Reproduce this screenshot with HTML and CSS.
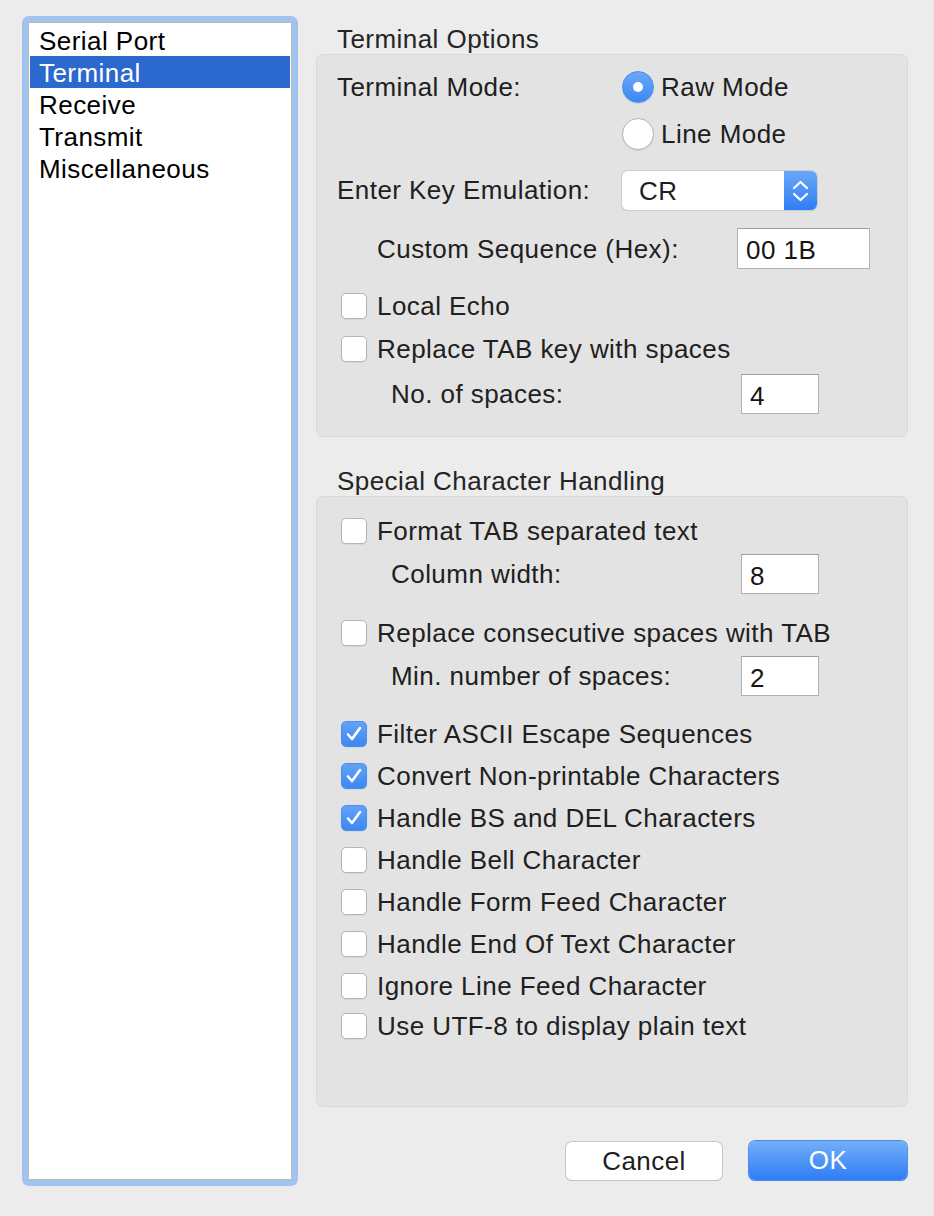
FILE: index.html
```html
<!DOCTYPE html>
<html>
<head>
<meta charset="utf-8">
<link rel="stylesheet" href="styles.css">
</head>
<body>
<div class="window">
  <div class="sidebar">
    <div class="list">
      <div class="item">Serial Port</div>
      <div class="item selected">Terminal</div>
      <div class="item">Receive</div>
      <div class="item">Transmit</div>
      <div class="item">Miscellaneous</div>
    </div>
  </div>
  <div class="main">
    <div class="group-title first">Terminal Options</div>
    <div class="group g1">
      <div class="row r-mode">
        <span class="lbl-wide">Terminal Mode:</span>
        <span class="radio on"></span><span class="radio-text">Raw Mode</span>
      </div>
      <div class="row r-line">
        <span class="lbl-wide"></span>
        <span class="radio"></span><span class="radio-text">Line Mode</span>
      </div>
      <div class="row r-enter">
        <span class="lbl-wide">Enter Key Emulation:</span>
        <div class="popup">
          <span class="popup-text">CR</span>
          <span class="popup-arrows">
            <svg width="33" height="39" viewBox="0 0 33 39"><path d="M10 17 L16.5 11 L23 17" fill="none" stroke="#fff" stroke-width="2.2" stroke-linecap="round" stroke-linejoin="round"/><path d="M10 23 L16.5 29 L23 23" fill="none" stroke="#fff" stroke-width="2.2" stroke-linecap="round" stroke-linejoin="round"/></svg>
          </span>
        </div>
      </div>
      <div class="row r-custom">
        <span class="lbl-custom">Custom Sequence (Hex):</span>
        <span class="field field-wide">00 1B</span>
      </div>
      <div class="row r-check r-echo">
        <span class="cb"></span><span class="cb-text">Local Echo</span>
      </div>
      <div class="row r-check r-tab">
        <span class="cb"></span><span class="cb-text">Replace TAB key with spaces</span>
      </div>
      <div class="row r-sub r-spaces">
        <span class="lbl-sub">No. of spaces:</span>
        <span class="field">4</span>
      </div>
    </div>

    <div class="group-title second">Special Character Handling</div>
    <div class="group g2">
      <div class="row r-check">
        <span class="cb"></span><span class="cb-text">Format TAB separated text</span>
      </div>
      <div class="row r-sub r-field1">
        <span class="lbl-sub">Column width:</span>
        <span class="field">8</span>
      </div>
      <div class="row r-check r-cons">
        <span class="cb"></span><span class="cb-text">Replace consecutive spaces with TAB</span>
      </div>
      <div class="row r-sub r-field1">
        <span class="lbl-sub">Min. number of spaces:</span>
        <span class="field">2</span>
      </div>
      <div class="row r-check r-filter">
        <span class="cb on"><svg width="26" height="26" viewBox="0 0 26 26"><path d="M7 13.5 L11 18 L19 7" fill="none" stroke="#fff" stroke-width="2.6" stroke-linecap="round" stroke-linejoin="round"/></svg></span><span class="cb-text">Filter ASCII Escape Sequences</span>
      </div>
      <div class="row r-check r-next">
        <span class="cb on"><svg width="26" height="26" viewBox="0 0 26 26"><path d="M7 13.5 L11 18 L19 7" fill="none" stroke="#fff" stroke-width="2.6" stroke-linecap="round" stroke-linejoin="round"/></svg></span><span class="cb-text">Convert Non-printable Characters</span>
      </div>
      <div class="row r-check r-next">
        <span class="cb on"><svg width="26" height="26" viewBox="0 0 26 26"><path d="M7 13.5 L11 18 L19 7" fill="none" stroke="#fff" stroke-width="2.6" stroke-linecap="round" stroke-linejoin="round"/></svg></span><span class="cb-text">Handle BS and DEL Characters</span>
      </div>
      <div class="row r-check r-next">
        <span class="cb"></span><span class="cb-text">Handle Bell Character</span>
      </div>
      <div class="row r-check r-next">
        <span class="cb"></span><span class="cb-text">Handle Form Feed Character</span>
      </div>
      <div class="row r-check r-next">
        <span class="cb"></span><span class="cb-text">Handle End Of Text Character</span>
      </div>
      <div class="row r-check r-next">
        <span class="cb"></span><span class="cb-text">Ignore Line Feed Character</span>
      </div>
      <div class="row r-check r-last">
        <span class="cb"></span><span class="cb-text">Use UTF-8 to display plain text</span>
      </div>
    </div>

    <div class="buttons">
      <div class="btn cancel">Cancel</div>
      <div class="btn ok">OK</div>
    </div>
  </div>
</div>
</body>
</html>
```

FILE: styles.css
```css
* { box-sizing: border-box; }
html, body { margin: 0; padding: 0; }
body {
  background: #ececec;
  font-family: "Liberation Sans", Arial, sans-serif;
  font-size: 26px;
  letter-spacing: 0.45px;
  color: #202020;
  width: 934px;
  height: 1216px;
  overflow: hidden;
}
.window {
  display: flex;
  gap: 18px;
  padding: 16px 0 0 22px;
}
.sidebar {
  width: 276px;
  height: 1170px;
  border: 6px solid #a3c3ef;
  border-radius: 7px;
  background: #a3c3ef;
}
.list {
  height: 100%;
  background: #fff;
  border: 1px solid #b9b9b9;
  padding: 1px 1px 0 1px;
}
.item {
  height: 32px;
  line-height: 34px;
  padding-left: 9px;
  color: #000;
  overflow: hidden;
}
.item.selected {
  background: #2b69cf;
  color: #fff;
}
.main {
  width: 592px;
  display: flex;
  flex-direction: column;
}
.group-title {
  line-height: 30px;
  height: 30px;
  padding-left: 21px;
  color: #242424;
}
.group-title.first {
  height: 38px;
  padding-top: 8px;
}
.group-title.second {
  margin-top: 29px;
}
.group {
  background: #e3e3e3;
  border: 1px solid #d8d8d8;
  border-radius: 7px;
}
.g1 { height: 383px; padding-top: 9px; }
.g2 { height: 611px; padding-top: 21px; }
.row {
  display: flex;
  align-items: center;
  line-height: 26px;
}
.r-mode { height: 46px; padding-left: 20px; }
.r-line { height: 48px; padding-left: 20px; }
.r-enter { height: 40px; margin-top: 12px; padding-left: 20px; }
.r-custom { height: 41px; margin-top: 18px; padding-left: 60px; }
.r-check { height: 26px; padding-left: 24px; }
.r-echo { margin-top: 24px; }
.r-tab { margin-top: 17px; }
.r-sub { height: 40px; padding-left: 74px; }
.r-spaces { margin-top: 12px; }
.r-field1 { margin-top: 10px; }
.r-cons { margin-top: 26px; }
.r-filter { margin-top: 25px; }
.r-next { margin-top: 16px; }
.r-last { margin-top: 14px; }

.lbl-wide { width: 285px; flex: none; }
.lbl-custom { width: 360px; flex: none; }
.lbl-sub { width: 350px; flex: none; }

.radio {
  width: 32px;
  height: 32px;
  border-radius: 50%;
  background: #fff;
  border: 1px solid #b4b4b4;
  box-shadow: 0 1px 1px rgba(0,0,0,0.08);
  flex: none;
  display: flex;
  align-items: center;
  justify-content: center;
}
.radio.on {
  background: linear-gradient(#6aa9f8, #3c88f3);
  border-color: #4a8ff0;
}
.radio.on::after {
  content: "";
  width: 10px;
  height: 10px;
  border-radius: 50%;
  background: #fff;
}
.radio-text { margin-left: 7px; }

.popup {
  width: 195px;
  height: 39px;
  display: flex;
  background: #fff;
  border-radius: 6px;
  box-shadow: 0 0 0 1px #cdcdcd, 0 1px 1px rgba(0,0,0,0.15);
  overflow: hidden;
}
.popup-text {
  flex: 1;
  padding-left: 17px;
  line-height: 40px;
  color: #1e1e1e;
}
.popup-arrows {
  width: 33px;
  height: 39px;
  background: linear-gradient(#69a8f8, #2f7ef5);
  display: block;
}
.popup-arrows svg { display: block; }

.field {
  width: 78px;
  height: 40px;
  background: #fff;
  border: 1px solid #b2b2b2;
  border-top-color: #9f9f9f;
  padding: 4px 0 0 8px;
  line-height: 34px;
  color: #151515;
  flex: none;
}
.field-wide { width: 133px; height: 41px; }

.cb {
  width: 26px;
  height: 26px;
  border-radius: 5px;
  background: #fff;
  border: 1px solid #b5b5b5;
  box-shadow: 0 1px 1px rgba(0,0,0,0.06);
  flex: none;
  display: block;
}
.cb.on {
  background: linear-gradient(#62a3f7, #3d87f2);
  border-color: #4a8ff0;
}
.cb svg { display: block; margin: -1px; }
.cb-text { margin-left: 10px; }

.buttons {
  display: flex;
  justify-content: flex-end;
  align-items: flex-start;
  gap: 27px;
  margin-top: 34px;
  padding-right: 1px;
}
.btn {
  height: 38px;
  line-height: 38px;
  text-align: center;
  border-radius: 6px;
}
.cancel {
  width: 156px;
  margin-top: 1px;
  background: #fff;
  box-shadow: 0 0 0 1px #c6c6c6, 0 1px 1px rgba(0,0,0,0.15);
  color: #1e1e1e;
}
.ok {
  width: 158px;
  height: 39px;
  line-height: 39px;
  background: linear-gradient(#72aff8, #2e7df6);
  box-shadow: 0 0 0 1px #4b8cf0, 0 1px 1px rgba(0,0,0,0.12);
  color: #fff;
}
```
